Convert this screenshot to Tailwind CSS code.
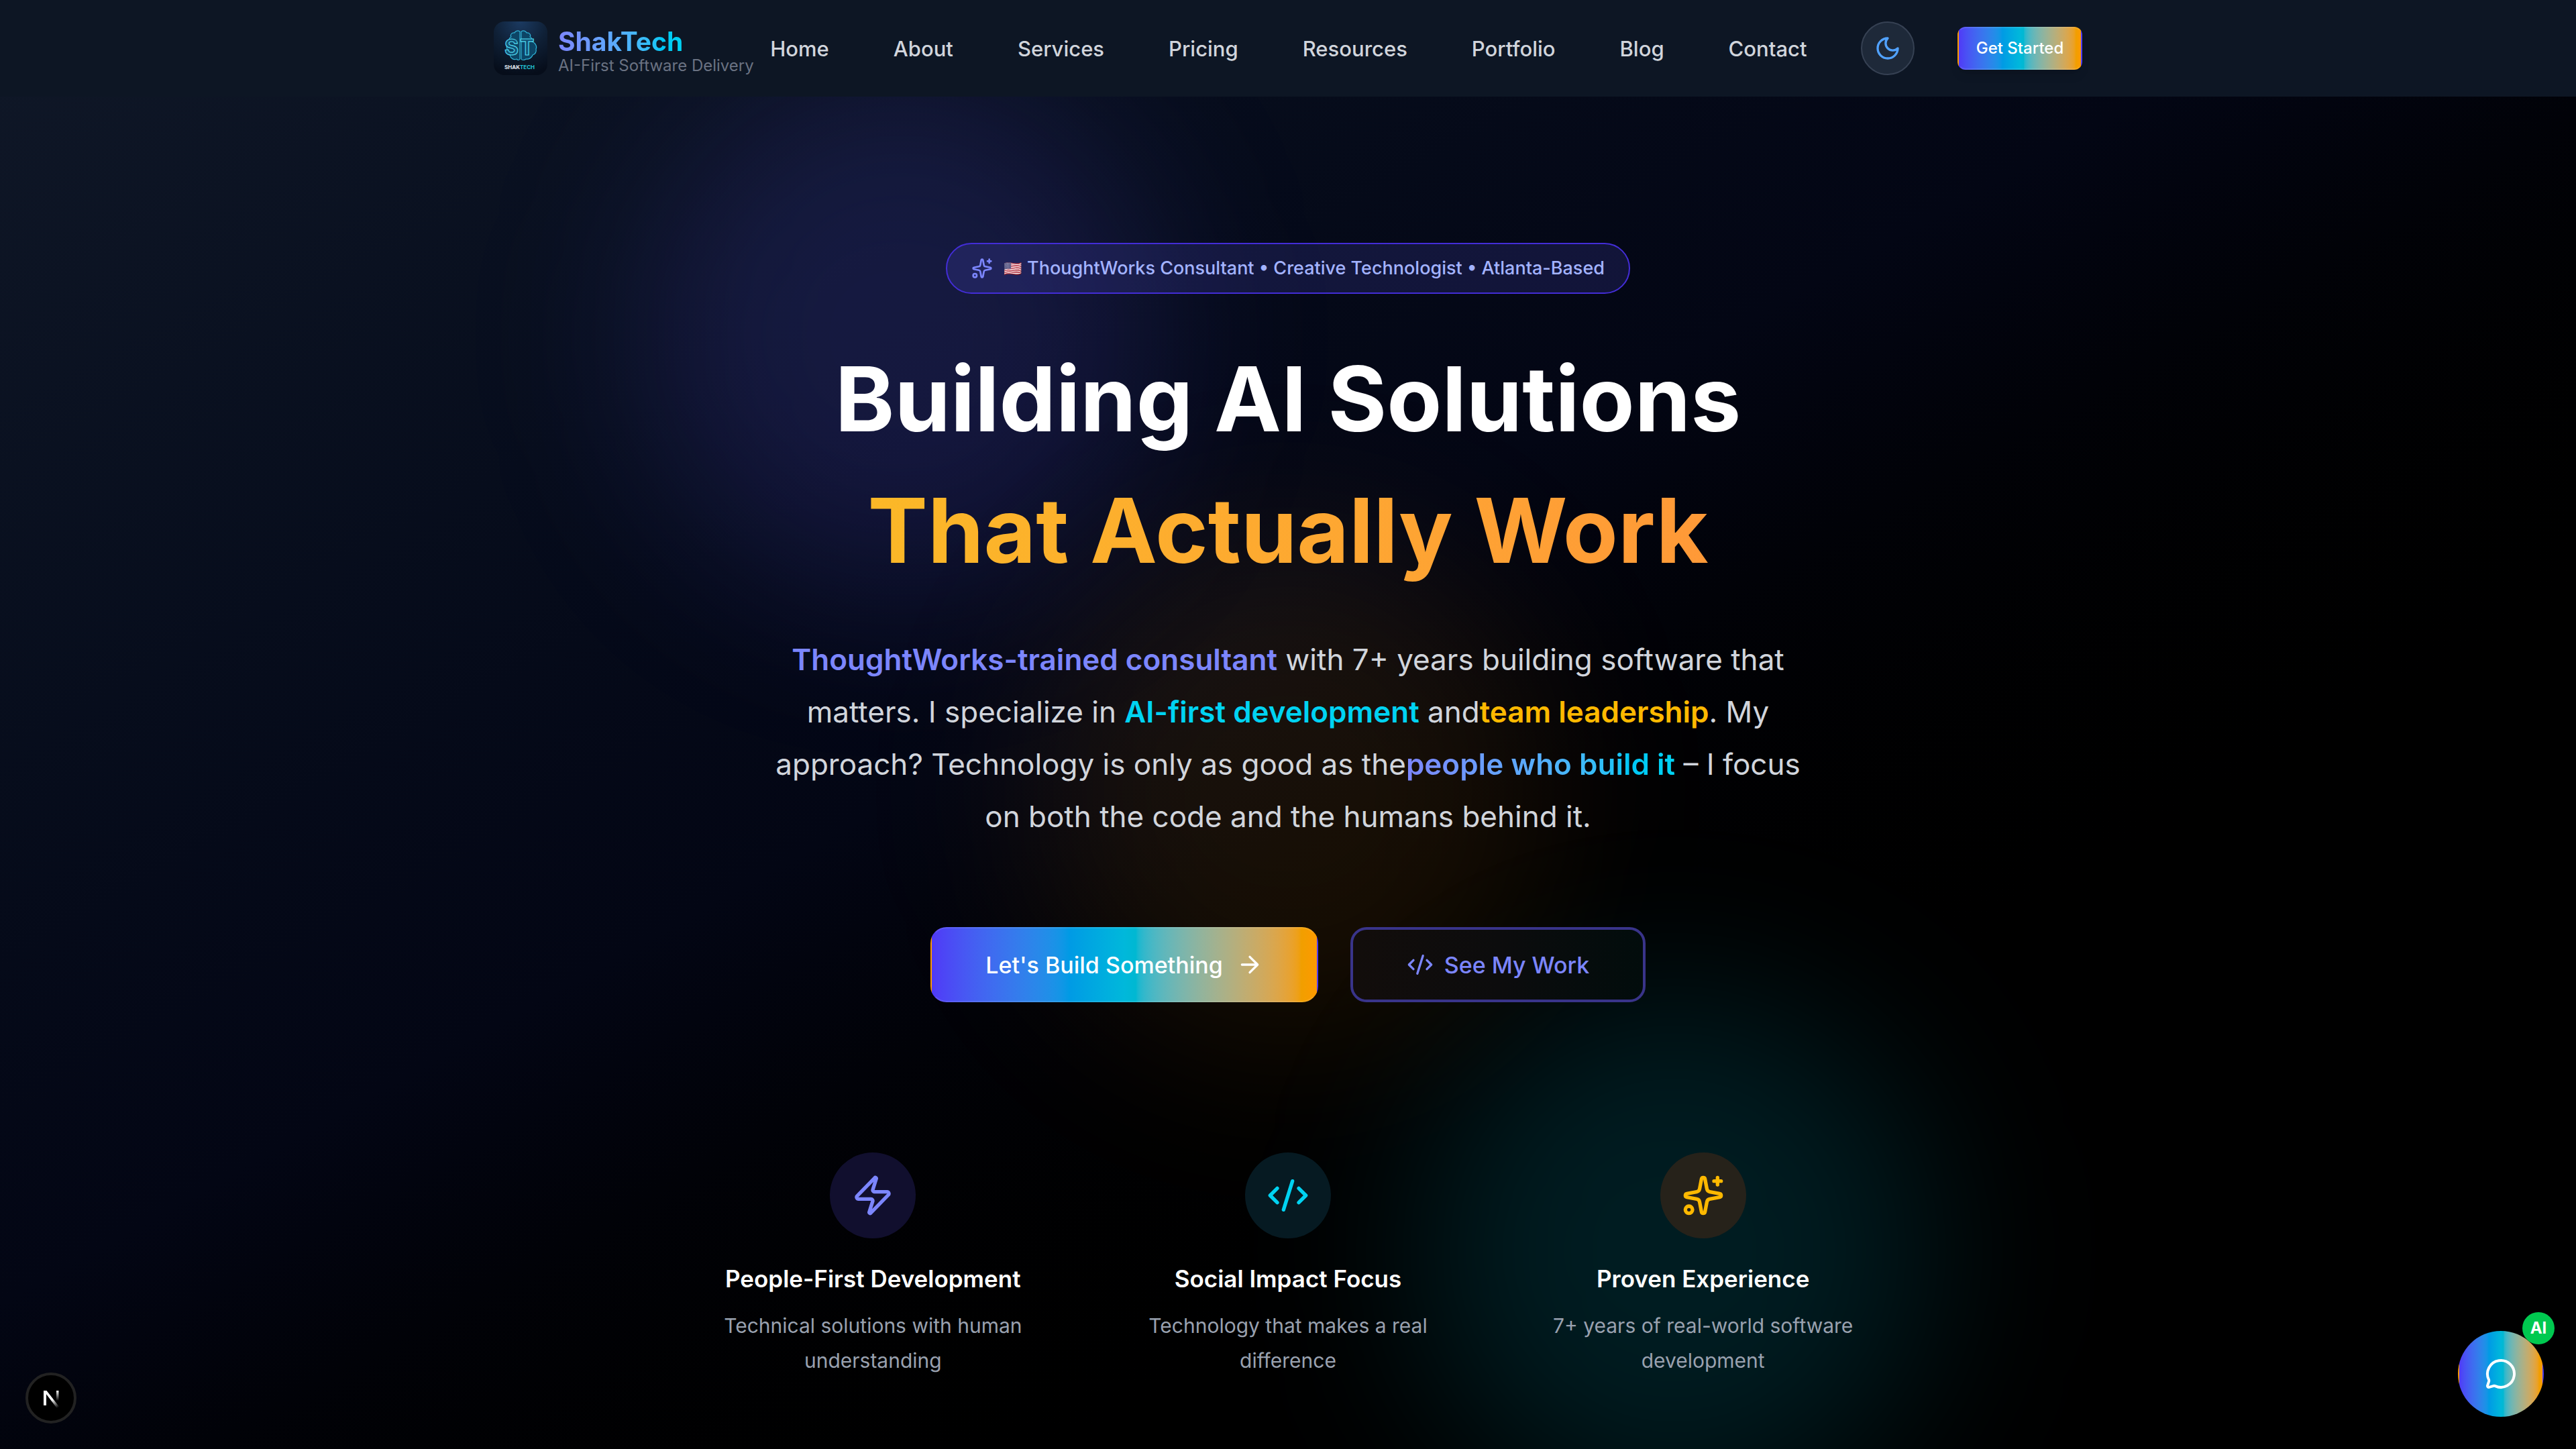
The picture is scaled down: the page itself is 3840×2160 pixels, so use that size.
<!DOCTYPE html>
<html lang="en">
<head>
<meta charset="utf-8">
<title>ShakTech</title>
<script src="https://cdn.jsdelivr.net/npm/@tailwindcss/browser@4"></script>
</head>
<body class="bg-black font-['Inter',sans-serif] text-white antialiased">
<div class="relative min-h-screen overflow-hidden bg-linear-to-br from-[#101828] via-[#030614] via-45% to-black to-74%">

  <!-- Ambient glows -->
  <div aria-hidden="true" class="absolute inset-0">
    <div class="absolute left-1/4 top-[116px] size-[768px] rounded-full bg-indigo-500/16 blur-[128px]"></div>
    <div class="absolute left-2/5 top-[796px] size-[768px] rounded-full bg-amber-500/9 blur-[128px]"></div>
    <div class="absolute right-1/4 top-[1480px] size-[768px] rounded-full bg-cyan-500/15 blur-[128px]"></div>
  </div>

  <header class="relative h-36 bg-[#0d1624]">
    <div class="mx-auto flex h-full max-w-[2560px] items-center justify-between px-24">
      <a href="#" class="flex items-center gap-4">
        <svg class="size-20 rounded-[16px]" viewBox="0 0 80 80">
          <defs>
            <radialGradient id="lg" cx=".5" cy="0" r="1"><stop offset="0" stop-color="#1b3a61"/><stop offset=".5" stop-color="#0f2036"/><stop offset="1" stop-color="#060d1a"/></radialGradient>
          </defs>
          <rect width="80" height="80" fill="url(#lg)"/>
          <g fill="#0c4566" stroke="#2fb4d8" stroke-width="1.2" stroke-linejoin="round">
            <path d="M39 15c-3-2-7-1-8 2-4-1-7 3-5 6-3 1-4 5-2 7-4 2-6 7-4 11-2 4 0 8 4 9 1 5 6 8 10 6 2 2 4 2 5 0z"/>
            <path d="M41 15c3-2 7-1 8 2 4-1 7 3 5 6 3 1 4 5 3 7 5 2 8 7 6 11 1 4-1 8-5 9-1 4-6 7-10 6-2 2-6 2-7 0z"/>
          </g>
          <text x="16" y="50" font-family="Inter" font-weight="700" font-size="32" fill="#125478" stroke="#4fd6ee" stroke-width="1.2">S</text>
          <text x="39" y="50" font-family="Inter" font-weight="700" font-size="32" fill="#125478" stroke="#4fd6ee" stroke-width="1.2">T</text>
          <text x="16" y="71" font-family="Inter" font-weight="700" font-size="8" fill="#e8eef5">SHAK<tspan fill="#22c3d6">TECH</tspan></text>
        </svg>
        <span class="flex flex-col pt-3">
          <span class="self-start bg-linear-to-r from-indigo-400 to-cyan-400 bg-clip-text text-[39px] font-bold leading-[40px] text-transparent">ShakTech</span>
          <span class="text-[24px] leading-[32px] text-[#6a7282]">AI-First Software Delivery</span>
        </span>
      </a>
      <nav class="flex items-center gap-24 pt-0.5 text-[31px] font-medium leading-[48px] text-gray-300">
        <a href="#">Home</a><a href="#">About</a><a href="#">Services</a><a href="#">Pricing</a><a href="#">Resources</a><a href="#">Portfolio</a><a href="#">Blog</a><a href="#">Contact</a>
      </nav>
      <div class="flex items-center gap-16 pl-14">
        <button aria-label="Toggle dark mode" class="flex size-20 items-center justify-center rounded-full border-2 border-[#364153] bg-[#1e2939]">
          <svg class="size-10" viewBox="0 0 24 24" fill="none" stroke="#51a2ff" stroke-width="2" stroke-linecap="round" stroke-linejoin="round"><path d="M12 3a6 6 0 0 0 9 9 9 9 0 1 1-9-9Z"/></svg>
        </button>
        <button class="h-16 w-[186px] rounded-[12px] border-2 border-x-transparent border-y-white/10 bg-linear-to-r from-indigo-600 via-cyan-500 to-amber-500 text-[24px] font-medium shadow-lg">Get Started</button>
      </div>
    </div>
  </header>

  <main class="relative flex flex-col items-center px-24 pt-[218px] pb-24">
    <div class="flex h-[76px] items-center gap-4 rounded-full border-2 border-indigo-700 bg-indigo-500/15 px-9 text-[27px] font-medium text-[#a3b3ff]">
      <svg class="size-8 text-indigo-400" viewBox="0 0 24 24" fill="none" stroke="currentColor" stroke-width="2" stroke-linecap="round" stroke-linejoin="round"><path d="M11.017 2.814a1 1 0 0 1 1.966 0l1.051 5.558a2 2 0 0 0 1.594 1.594l5.558 1.051a1 1 0 0 1 0 1.966l-5.558 1.051a2 2 0 0 0-1.594 1.594l-1.051 5.558a1 1 0 0 1-1.966 0l-1.051-5.558a2 2 0 0 0-1.594-1.594l-5.558-1.051a1 1 0 0 1 0-1.966l5.558-1.051a2 2 0 0 0 1.594-1.594z"/><path d="M20 2v4M22 4h-4"/><circle cx="4" cy="20" r="2"/></svg>
      <span class="flex items-center gap-2"><span class="text-[22px]">🇺🇸</span><span>ThoughtWorks Consultant • Creative Technologist • Atlanta-Based</span></span>
    </div>

    <h1 class="mt-[58px] text-center text-[134px] font-bold leading-[196px]">
      <span class="block">Building AI Solutions</span>
      <span class="block bg-linear-to-r from-[#fbb926] to-[#ff9838] bg-clip-text text-transparent">That Actually Work</span>
    </h1>

    <p class="mt-[56px] max-w-[1560px] text-center text-[44px] leading-[78px] text-gray-300"><span class="font-semibold text-indigo-400">ThoughtWorks-trained consultant</span> with 7+ years building software that matters. I specialize in <span class="font-semibold text-[#00d3f2]">AI-first development</span> and<span class="font-semibold text-[#ffb900]">team leadership</span>. My approach? Technology is only as good as the<span class="bg-linear-to-r from-indigo-400 to-cyan-400 bg-clip-text font-semibold text-transparent">people who build it</span> – I focus on both the code and the humans behind it.</p>

    <div class="mt-[126px] flex gap-12 text-[34px] font-medium">
      <button class="flex h-28 w-[578px] items-center justify-center gap-5 rounded-[24px] border-2 border-x-transparent border-y-white/10 bg-linear-to-r from-indigo-600 via-cyan-500 to-amber-500">Let's Build Something
        <svg class="size-10" viewBox="0 0 24 24" fill="none" stroke="currentColor" stroke-width="2" stroke-linecap="round" stroke-linejoin="round"><path d="M5 12h14M12 5l7 7-7 7"/></svg>
      </button>
      <button class="flex h-28 w-[440px] items-center justify-center gap-4 rounded-[24px] border-4 border-[#39348a] bg-linear-to-r from-[#120d0b] via-[#0c0c0d] to-[#020c0c] text-indigo-400">
        <svg class="size-10" viewBox="0 0 24 24" fill="none" stroke="currentColor" stroke-width="2" stroke-linecap="round" stroke-linejoin="round"><path d="m18 16 4-4-4-4M6 8l-4 4 4 4M14.5 4l-5 16"/></svg>
        See My Work
      </button>
    </div>

    <div class="mt-56 grid w-full max-w-[1792px] grid-cols-3 gap-16 text-center">
      <section class="flex flex-col items-center">
        <div class="flex size-32 items-center justify-center rounded-full bg-[#110f2e]">
          <svg class="size-16 text-indigo-400" viewBox="0 0 24 24" fill="none" stroke="currentColor" stroke-width="2" stroke-linecap="round" stroke-linejoin="round"><path d="M4 14a1 1 0 0 1-.78-1.63l9.9-10.2a.5.5 0 0 1 .86.46l-1.92 6.02A1 1 0 0 0 13 10h7a1 1 0 0 1 .78 1.63l-9.9 10.2a.5.5 0 0 1-.86-.46l1.92-6.02A1 1 0 0 0 11 14z"/></svg>
        </div>
        <h3 class="mt-8 text-[35px] font-semibold leading-[56px]">People-First Development</h3>
        <p class="mt-4 max-w-[507px] text-[30px] leading-[52px] text-[#99a1af]">Technical solutions with human understanding</p>
      </section>
      <section class="flex flex-col items-center">
        <div class="flex size-32 items-center justify-center rounded-full bg-[#061a22]">
          <svg class="size-16 text-[#00d3f2]" viewBox="0 0 24 24" fill="none" stroke="currentColor" stroke-width="2" stroke-linecap="round" stroke-linejoin="round"><path d="m18 16 4-4-4-4M6 8l-4 4 4 4M14.5 4l-5 16"/></svg>
        </div>
        <h3 class="mt-8 text-[35px] font-semibold leading-[56px]">Social Impact Focus</h3>
        <p class="mt-4 max-w-[507px] text-[30px] leading-[52px] text-[#99a1af]">Technology that makes a real difference</p>
      </section>
      <section class="flex flex-col items-center">
        <div class="flex size-32 items-center justify-center rounded-full bg-[#26221a]">
          <svg class="size-16 text-[#ffb900]" viewBox="0 0 24 24" fill="none" stroke="currentColor" stroke-width="2" stroke-linecap="round" stroke-linejoin="round"><path d="M11.017 2.814a1 1 0 0 1 1.966 0l1.051 5.558a2 2 0 0 0 1.594 1.594l5.558 1.051a1 1 0 0 1 0 1.966l-5.558 1.051a2 2 0 0 0-1.594 1.594l-1.051 5.558a1 1 0 0 1-1.966 0l-1.051-5.558a2 2 0 0 0-1.594-1.594l-5.558-1.051a1 1 0 0 1 0-1.966l5.558-1.051a2 2 0 0 0 1.594-1.594z"/><path d="M20 2v4M22 4h-4"/><circle cx="4" cy="20" r="2"/></svg>
        </div>
        <h3 class="mt-8 text-[35px] font-semibold leading-[56px]">Proven Experience</h3>
        <p class="mt-4 max-w-[507px] text-[30px] leading-[52px] text-[#99a1af]">7+ years of real-world software development</p>
      </section>
    </div>
  </main>
</div>

<button aria-label="Developer tools" class="fixed bottom-[38px] left-[38px] flex size-[76px] items-center justify-center rounded-full border-4 border-[#222] bg-black">
  <svg class="size-8" viewBox="0 0 32 32" fill="none">
    <defs>
      <linearGradient id="n1" x1="18" y1="18" x2="27" y2="30" gradientUnits="userSpaceOnUse"><stop stop-color="#fff"/><stop offset="1" stop-color="#fff" stop-opacity="0"/></linearGradient>
      <linearGradient id="n2" x1="0" y1="5" x2="0" y2="20" gradientUnits="userSpaceOnUse"><stop stop-color="#fff"/><stop offset="1" stop-color="#fff" stop-opacity="0"/></linearGradient>
    </defs>
    <path d="M5 27V5h4v22z" fill="#fff"/><path d="M5 5h4.500L29 30l-3.500 2z" fill="url(#n1)"/><path d="M24 5h3.500v16H24z" fill="url(#n2)"/>
  </svg>
</button>

<div class="fixed bottom-12 right-12">
  <button aria-label="Open AI chat" class="flex size-32 items-center justify-center rounded-full border-2 border-transparent bg-linear-to-r from-indigo-600 via-cyan-500 to-amber-500">
    <svg class="size-12" viewBox="0 0 24 24" fill="none" stroke="#fff" stroke-width="2" stroke-linecap="round" stroke-linejoin="round"><path d="M2.992 16.342a2 2 0 0 1 .094 1.167l-1.065 3.290a1 1 0 0 0 1.236 1.168l3.413-.998a2 2 0 0 1 1.099.092 10 10 0 1 0-4.777-4.719"/></svg>
  </button>
  <span class="absolute -right-4 -top-7 flex size-12 items-center justify-center rounded-full bg-[#00c950] text-[24px] font-bold">AI</span>
</div>
</body>
</html>
